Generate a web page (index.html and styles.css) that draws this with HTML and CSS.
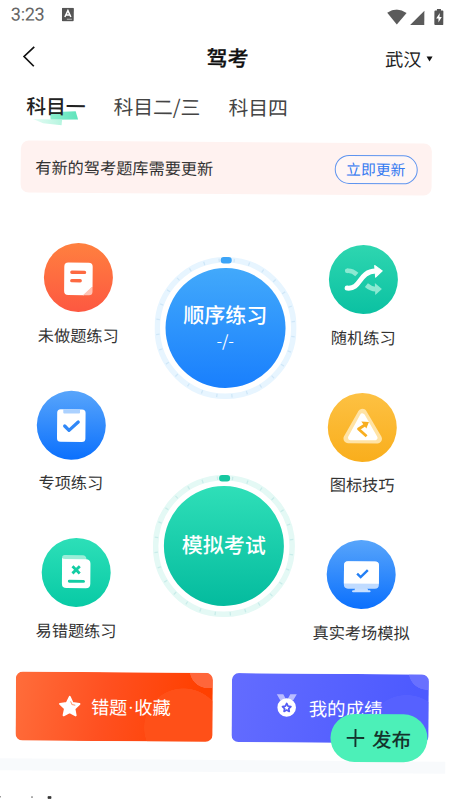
FILE: index.html
```html
<!DOCTYPE html>
<html lang="zh-CN">
<head>
<meta charset="utf-8">
<title>驾考</title>
<link rel="stylesheet" href="styles.css">
</head>
<body>
<div class="app">
  <div class="status">
    <span class="time">3:23</span>
    <svg class="ime" width="12" height="14" viewBox="0 0 12 14"><rect width="12" height="13.5" rx="1" fill="#555"/><path d="M3 9.2 6 2.8 9 9.2M4.2 7.2h3.6" fill="none" stroke="#fff" stroke-width="1.5"/><path d="M5 11.5h5" stroke="#bbb" stroke-width="1"/></svg>
    <svg class="wifi" width="20" height="16" viewBox="0 0 20 16"><path d="M.3 3.6Q10-3.4 19.7 3.6L10 15.3Z" fill="#5b5b5b"/></svg>
    <svg class="signal" width="15" height="15" viewBox="0 0 15 15"><path d="M14.5.3V14.6H.3Z" fill="#5b5b5b"/></svg>
    <svg class="battery" width="10" height="17" viewBox="0 0 10 17"><path d="M3 .3h4v1.6h1.5q1 0 1 1v12.6q0 1-1 1h-7q-1 0-1-1V2.900q0-1 1-1H3Z" fill="#555"/><path d="M5.900 4.300 2.300 9.800h2.300v4L7.900 8.300H5.600Z" fill="#fff"/></svg>
  </div>

  <header class="header">
    <svg class="back" width="13" height="22" viewBox="0 0 13 22"><path d="M11.600 1.300 1.500 11l9.800 9.700" fill="none" stroke="#111" stroke-width="1.700"/></svg>
    <h1 class="title">驾考</h1>
    <div class="city">武汉<i class="caret"></i></div>
  </header>

  <nav class="tabs">
    <span class="tab active">科目一<svg class="mark" width="46" height="16" viewBox="0 0 46 16">
      <defs><linearGradient id="mk" x1="0" x2="1"><stop offset="0" stop-color="#8bf0cf"/><stop offset="1" stop-color="#5fe3bb"/></linearGradient>
      <linearGradient id="mk2" x1="0" x2="1"><stop offset="0" stop-color="#e4fbf4"/><stop offset="1" stop-color="#b5f5df"/></linearGradient></defs>
      <path d="M17 1.500 42.500 0.500 45 8.500 17.500 9Z" fill="url(#mk)"/><path d="M0 8.500 29 9 28.500 14.500 10 12.500Z" fill="url(#mk2)"/></svg></span>
    <span class="tab">科目二/三</span>
    <span class="tab">科目四</span>
  </nav>

  <section class="notice">
    <span>有新的驾考题库需要更新</span>
    <button class="update">立即更新</button>
  </section>

  <main class="practice">
    <div class="column">
      <div class="item">
        <div class="disc orange"><svg viewBox="0 0 68 68"><path d="M24 19.500h20a4 4 0 0 1 4 4V43l-8.500 8.500H24a4 4 0 0 1-4-4v-24a4 4 0 0 1 4-4Z" fill="#fff"/><path d="M48 42.500V48q0 3.500-3.500 3.500H38.500Z" fill="#ffc4b5"/><path d="M27.500 29h12.500M27.500 37.300h8.300" stroke="#fd6a42" stroke-width="3.300" stroke-linecap="round"/></svg></div>
        <span class="label">未做题练习</span>
      </div>
      <div class="item offset">
        <div class="disc blue"><svg viewBox="0 0 68 68"><rect x="20" y="18.300" width="28" height="32" rx="3.500" fill="#fff"/><path d="M26 18.300h16.500v3q0 1-1 1H27q-1 0-1-1Z" fill="#abd1ff"/><path d="m27.500 34.700 4.300 4.300 9-8.300" fill="none" stroke="#3088f8" stroke-width="3.200" stroke-linecap="round" stroke-linejoin="round"/></svg></div>
        <span class="label">专项练习</span>
      </div>
      <div class="item">
        <div class="disc green"><svg viewBox="0 0 68 68"><path d="M22.500 17h18q3 0 3.500 3.500V27H20V19.500q0-2.500 2.500-2.500Z" fill="#9beed8"/><path d="M20 20q1 1 3 1H43.500q4.500 0 4.500 4.500V45q0 4.500-4.500 4.500h-19q-4.500 0-4.500-4.500Z" fill="#fff"/><path d="m30.300 28 7.200 7m0-7-7.200 7" stroke="#13cda4" stroke-width="2.800"/><path d="M27.300 42.800h14" stroke="#13cda4" stroke-width="2.900" stroke-linecap="round"/></svg></div>
        <span class="label">易错题练习</span>
      </div>
    </div>

    <div class="column dials">
      <div class="dial sequence">
        <svg class="ring" viewBox="0 0 142 142"><circle cx="71" cy="71" r="68.300" fill="none" stroke="#e7f5ff" stroke-width="5.600"/><circle cx="71" cy="71" r="68" fill="none" stroke="#cfe7f8" stroke-width="3.500" pathLength="336" stroke-dasharray="1 11" stroke-dashoffset="-6"/><rect x="65.700" y="0" width="11" height="6.500" rx="3" fill="#3ca4f7"/></svg>
        <div class="face"><strong>顺序练习</strong><span>-/-</span></div>
      </div>
      <div class="dial exam">
        <svg class="ring" viewBox="0 0 142 142"><circle cx="71" cy="71" r="68.300" fill="none" stroke="#e4f9f5" stroke-width="5.600"/><circle cx="71" cy="71" r="68" fill="none" stroke="#c8ecea" stroke-width="3.500" pathLength="336" stroke-dasharray="1 11" stroke-dashoffset="-6"/><rect x="65.700" y="0" width="11" height="6.500" rx="3" fill="#16c7a0"/></svg>
        <div class="face"><strong>模拟考试</strong></div>
      </div>
    </div>

    <div class="column">
      <div class="item">
        <div class="disc teal"><svg viewBox="0 0 68 68"><path d="M18 25.500q5-.5 9.500 3.500M37 39.500q4.500 3.800 9 3.800" fill="none" stroke="#8ce9d2" stroke-width="4.600"/><circle cx="18" cy="25.500" r="2.300" fill="#8ce9d2"/><path d="m45.300 37.300 7 6-6.500 5.900Z" fill="#8ce9d2"/><path d="M18 42.500c14 1.500 11-16.500 28-17" fill="none" stroke="#fff" stroke-width="4.900" stroke-linecap="round"/><path d="m45 20 7.500 5.300-6.500 6.200Z" fill="#fff" stroke="#fff" stroke-linejoin="round"/></svg></div>
        <span class="label">随机练习</span>
      </div>
      <div class="item">
        <div class="disc yellow"><svg viewBox="0 0 68 68"><path d="M34 20 49 45H20Z" fill="#ffe3a5" stroke="#ffe3a5" stroke-width="9" stroke-linejoin="round"/><path d="M34 22.500 46.500 44H22.500Z" fill="#fff" stroke="#fff" stroke-width="5" stroke-linejoin="round"/><path d="m38.300 42.500-8-7 7-4.500" fill="none" stroke="#f8ae20" stroke-width="2.800" stroke-linejoin="round"/><path d="m33 28 7.500.500-2.500 6.500Z" fill="#f8ae20"/></svg></div>
        <span class="label">图标技巧</span>
      </div>
      <div class="item">
        <div class="disc blue"><svg viewBox="0 0 68 68"><path d="M28.500 46h11l1.500 3.500h1.500q2 1 0 2H26q-2-1 0-2h1.500Z" fill="#c7dfff"/><rect x="17" y="21" width="34.500" height="27" rx="4" fill="#c0dbff"/><path d="M21 21h26.500q4 0 4 4v18H17V25q0-4 4-4Z" fill="#fff"/><path d="m30 33.200 3.500 3.300 7-6.800" fill="none" stroke="#237ff5" stroke-width="2.400"/></svg></div>
        <span class="label">真实考场模拟</span>
      </div>
    </div>
  </main>

  <section class="cards">
    <a class="card wrong">
      <svg class="star" width="24" height="24" viewBox="0 0 24 24"><path d="m12 2 2.900 6.200 6.800.9-5 4.700 1.300 6.700-6-3.300-6 3.300 1.300-6.700-5-4.700 6.800-.9Z" fill="#fff" stroke="#fff" stroke-width="2" stroke-linejoin="round"/><path d="m12.800 6.500 1.600 3.200 3.200.6" fill="none" stroke="#ff9a72" stroke-width="1"/></svg>
      <span>错题<b class="dot">·</b>收藏</span>
    </a>
    <a class="card score">
      <svg class="medal" width="24" height="24" viewBox="0 0 24 24"><path d="M2 .8h6.500l3 5.400-6 .5Zm20 0h-6.500l-3 5.400 6 .5Z" fill="#b9bcff"/><circle cx="12" cy="14" r="9.300" fill="#fff"/><path d="m12 10 1.300 2.700 2.900.4-2.100 2 .5 2.900-2.600-1.400L9.400 18l.5-2.900-2.100-2 2.900-.4Z" fill="none" stroke="#555df4" stroke-width="1.700" stroke-linejoin="round"/></svg>
      <span>我的成绩</span>
    </a>
    <button class="publish"><svg width="18" height="18" viewBox="0 0 18 18"><path d="M9 0v18M0 9h18" stroke="#14332c" stroke-width="1.900"/></svg>发布</button>
  </section>
  <div class="divider"></div>
  <svg class="peek" width="60" height="4" viewBox="0 0 60 4"><path d="M1 1.500h3M34 1.500h2M51 .8h3v2h-3z" fill="#333" stroke="#444" stroke-width=".8"/></svg>
</div>
</body>
</html>
```

FILE: styles.css
```css
* { box-sizing: border-box; }

body {
  margin: 0;
  height: 799px;
  overflow: hidden;
  background: #fff;
  color: #333;
  font-family: "Noto Sans CJK SC", sans-serif;
}

.app {
  width: 449px;
  height: 799px;
  display: flex;
  flex-direction: column;
  transform: rotate(0.43deg);
}

button { font: inherit; padding: 0; border: 0; }

.status {
  height: 31px;
  flex: none;
  display: flex;
  align-items: center;
  padding: 0 8px 0 8px;
}
.time { font: 18px/20px Roboto, sans-serif; color: #666; width: 51px; letter-spacing: -0.3px; }
.wifi { margin-left: auto; margin-right: 3px; }
.signal { margin-right: 9px; position: relative; top: 1px; }

.header {
  height: 52px;
  flex: none;
  display: grid;
  grid-template-columns: 1fr auto 1fr;
  align-items: center;
  padding: 0 19px 0 20px;
}
.back { position: relative; top: 1px; }
.title { margin: 0; font-size: 21px; line-height: 30px; font-weight: 500; color: #111; -webkit-text-stroke: 0.3px #111; }
.city { justify-self: end; display: flex; align-items: center; gap: 5px; font-size: 18.300px; color: #222; }
.caret { border: 3.5px solid transparent; border-top: 5px solid #111; border-bottom: 0; }

.tabs {
  height: 46px;
  flex: none;
  display: flex;
  align-items: center;
  gap: 28px;
  padding: 1px 0 0 24px;
  font-size: 19.8px;
  color: #444;
}
.active { position: relative; z-index: 0; font-weight: 500; color: #222; }
.mark { position: absolute; z-index: -1; left: 7px; top: 19.500px; }

.notice {
  margin: 13.300px 19px 0;
  height: 52px;
  flex: none;
  display: flex;
  align-items: center;
  justify-content: space-between;
  padding: 0 14.500px;
  border-radius: 8px;
  background: #fff2f0;
  font-size: 16.200px;
}
.update {
  width: 83px;
  height: 29px;
  border: 1px solid #5e94ef;
  border-radius: 15px;
  background: #fff6f5;
  color: #357af1;
  font-size: 14.800px;
  line-height: 26px;
}

.practice {
  height: 428.500px;
  flex: none;
  margin-top: 50.200px;
  padding-left: 15.800px;
  display: grid;
  grid-template-columns: 124px 170px 106px;
}
.column { display: flex; flex-direction: column; align-items: center; }
.item { height: 147.500px; display: flex; flex-direction: column; align-items: center; }
.item.offset { margin-right: 12.500px; }
.disc { width: 69px; height: 69px; border-radius: 50%; }
.disc svg { display: block; width: 100%; height: 100%; }
.orange { background: linear-gradient(#ff803f, #fd5841); }
.blue { background: linear-gradient(#58a5fb, #0b70fd); }
.green { background: linear-gradient(#2ddfb8, #08caa5); }
.teal { background: linear-gradient(#2ed6b0, #0bc1a2); }
.yellow { background: linear-gradient(#fdc143, #f9ae1c); }
.label { margin-top: 10.300px; font-size: 16.200px; line-height: 24px; white-space: nowrap; }

.dials { gap: 75.500px; padding-top: 12.600px; }
.dial { width: 142px; height: 142px; flex: none; display: grid; place-items: center; }
.ring, .face { grid-area: 1 / 1; }
.face {
  width: 120px;
  height: 120px;
  border-radius: 50%;
  display: flex;
  flex-direction: column;
  align-items: center;
  justify-content: center;
  padding-bottom: 3px;
  color: #fff;
}
.face strong { font-size: 21px; line-height: 30px; font-weight: 500; }
.face span { font-size: 16px; line-height: 22px; }
.sequence .face { padding-bottom: 7px; background: linear-gradient(#42a9fb, #197ffd); }
.exam .face { background: linear-gradient(#2fdfb8, #04bb9e); }

.cards { position: relative; flex: none; display: flex; gap: 18.300px; padding-left: 18.300px; }
.card {
  width: 197px;
  height: 69px;
  border-radius: 7px;
  display: flex;
  align-items: center;
  color: #fff;
  font-size: 18.400px;
}
.wrong {
  padding-left: 41.500px;
  gap: 9.500px;
  background:
    radial-gradient(circle at 192px -3px, #ff663a 18px, transparent 18.500px),
    radial-gradient(circle at 168px 55px, #ff5018 39px, transparent 39.500px),
    linear-gradient(100deg, #ff6d3b, #ff5020 45%, #ff4000 90%);
}
.wrong span { font-size: 18.200px; }
.dot { display: inline-block; width: 7px; text-align: center; font-family: Roboto, sans-serif; font-weight: 400; }
.score {
  padding-left: 43.500px;
  gap: 10px;
  background:
    radial-gradient(circle at 195px -3px, #6870ff 18px, transparent 18.500px),
    radial-gradient(circle at 175px 60px, #5661ff 39px, transparent 39.500px),
    linear-gradient(100deg, #636cff, #4d5aff 90%);
}
.star { margin-top: 1px; }
.medal { position: relative; top: -2px; }
.publish {
  position: absolute;
  left: 333px;
  top: 40.500px;
  width: 97px;
  height: 48px;
  border-radius: 24px;
  display: flex;
  align-items: center;
  justify-content: center;
  gap: 7px;
  background: #4cf0b8;
  color: #14332c;
  font-size: 19.500px;
  font-weight: 500;
}

.divider { margin: 18.500px 1px 0 -4px; height: 12px; flex: none; background: #f8fafc; }
.peek { margin-top: 24.500px; flex: none; }
```
